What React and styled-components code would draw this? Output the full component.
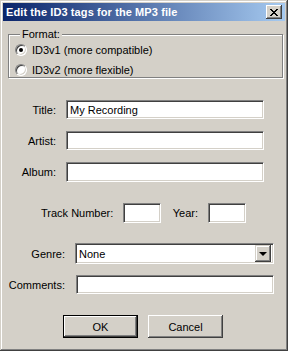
import React, { useState } from 'react';
import styled, { createGlobalStyle } from 'styled-components';

const GlobalStyle = createGlobalStyle`
  html, body {
    margin: 0;
    padding: 0;
    background: #d4d0c8;
  }
  body {
    font-family: "Liberation Sans", Arial, sans-serif;
    font-size: 11px;
    color: #000;
  }
`;

const Window = styled.div`
  width: 288px;
  height: 351px;
  box-sizing: border-box;
  padding: 3px;
  background: #d4d0c8;
  box-shadow:
    inset -1px -1px #404040,
    inset 1px 1px #d4d0c8,
    inset -2px -2px #808080,
    inset 2px 2px #fff;
  display: flex;
  flex-direction: column;
`;

const TitleBar = styled.div`
  height: 18px;
  display: flex;
  align-items: center;
  justify-content: space-between;
  padding: 0 3px 0 2px;
  background: linear-gradient(to right, #0a246a, #a6caf0);
  color: #fff;
  font-weight: bold;
  font-size: 11px;
`;

const Caption = styled.span`
  padding-left: 1px;
  letter-spacing: 0.1px;
`;

const CloseButton = styled.button`
  width: 16px;
  height: 14px;
  padding: 0;
  border: none;
  background: #d4d0c8;
  display: flex;
  align-items: center;
  justify-content: center;
  box-shadow:
    inset -1px -1px #404040,
    inset 1px 1px #fff,
    inset -2px -2px #808080;
`;

const Body = styled.div`
  display: flex;
  flex-direction: column;
  padding: 7px 2px 0 5px;
`;

const GroupBox = styled.fieldset`
  margin: 0;
  padding: 4px 0 0 6px;
  height: 50px;
  box-sizing: border-box;
  border: 1px solid #808080;
  box-shadow: inset 1px 1px #fff, 1px 1px #fff;
  display: flex;
  flex-direction: column;
  gap: 8px;
`;

const Legend = styled.legend`
  padding: 0 2px;
  margin-left: 5px;
  line-height: 12px;
  background: #d4d0c8;
`;

const RadioRow = styled.label`
  display: flex;
  align-items: center;
  gap: 5px;
  height: 12px;
  cursor: default;
`;

const RadioDot = styled.span`
  position: relative;
  width: 12px;
  height: 12px;
  box-sizing: border-box;
  border-radius: 50%;
  background: #fff;
  border: 1px solid;
  border-color: #808080 #fff #fff #808080;
  box-shadow: inset 1px 1px #404040, inset -1px -1px #d4d0c8;

  &::after {
    content: '';
    display: ${({ $checked }) => ($checked ? 'block' : 'none')};
    position: absolute;
    left: 3px;
    top: 3px;
    width: 4px;
    height: 4px;
    border-radius: 50%;
    background: #000;
  }
`;

const Row = styled.div`
  display: flex;
  align-items: center;
  margin-top: ${({ $top }) => $top}px;
  padding-left: ${({ $indent }) => $indent || 0}px;
`;

const Label = styled.span`
  width: ${({ $w }) => $w}px;
  text-align: right;
  white-space: nowrap;
  margin-right: ${({ $gap }) => $gap}px;
  flex-shrink: 0;
`;

const TextBox = styled.div`
  width: ${({ $w }) => $w}px;
  height: ${({ $h }) => $h || 19}px;
  box-sizing: border-box;
  background: #fff;
  border: 1px solid;
  border-color: #808080 #fff #fff #808080;
  box-shadow: inset 1px 1px #404040, inset -1px -1px #d4d0c8;
  padding: 0 3px;
  display: flex;
  align-items: center;
  flex-shrink: 0;
`;

const Select = styled(TextBox)`
  padding-right: 2px;
  justify-content: space-between;
`;

const DropButton = styled.span`
  width: 16px;
  height: 17px;
  box-sizing: border-box;
  background: #d4d0c8;
  display: flex;
  align-items: center;
  justify-content: center;
  box-shadow:
    inset -1px -1px #404040,
    inset 1px 1px #d4d0c8,
    inset -2px -2px #808080,
    inset 2px 2px #fff;
`;

const Arrow = styled.span`
  width: 0;
  height: 0;
  border-left: 4px solid transparent;
  border-right: 4px solid transparent;
  border-top: 4px solid #000;
  margin-top: 1px;
`;

const ButtonRow = styled.div`
  display: flex;
  gap: 10px;
  margin-top: 21px;
  padding-left: 55px;
`;

const Button = styled.button`
  width: 75px;
  height: 23px;
  padding: 0;
  font: inherit;
  color: #000;
  background: #d4d0c8;
  border: ${({ $default }) => ($default ? '1px solid #000' : 'none')};
  box-shadow: ${({ $default }) =>
    $default
      ? 'inset -1px -1px #404040, inset 1px 1px #fff, inset -2px -2px #808080'
      : 'inset -1px -1px #404040, inset 1px 1px #fff, inset -2px -2px #808080, inset 2px 2px #d4d0c8'};
`;

const CloseIcon = () => (
  <svg width="8" height="7" viewBox="0 0 8 7" shapeRendering="crispEdges">
    <path
      d="M0 0h2v1h-2zM6 0h2v1h-2zM1 1h2v1h-2zM5 1h2v1h-2zM2 2h4v1h-4zM3 3h2v1h-2zM2 4h4v1h-4zM1 5h2v1h-2zM5 5h2v1h-2zM0 6h2v1h-2zM6 6h2v1h-2z"
      fill="#000"
    />
  </svg>
);

export default function App() {
  const [format, setFormat] = useState('v1');

  return (
    <>
      <GlobalStyle />
      <Window>
        <TitleBar>
          <Caption>Edit the ID3 tags for the MP3 file</Caption>
          <CloseButton>
            <CloseIcon />
          </CloseButton>
        </TitleBar>
        <Body>
          <GroupBox>
            <Legend>Format:</Legend>
            <RadioRow onClick={() => setFormat('v1')}>
              <RadioDot $checked={format === 'v1'} />
              ID3v1 (more compatible)
            </RadioRow>
            <RadioRow onClick={() => setFormat('v2')}>
              <RadioDot $checked={format === 'v2'} />
              ID3v2 (more flexible)
            </RadioRow>
          </GroupBox>

          <Row $top={22}>
            <Label $w={48} $gap={10}>Title:</Label>
            <TextBox $w={198}>My Recording</TextBox>
          </Row>
          <Row $top={12}>
            <Label $w={48} $gap={10}>Artist:</Label>
            <TextBox $w={198} />
          </Row>
          <Row $top={12}>
            <Label $w={48} $gap={10}>Album:</Label>
            <TextBox $w={198} $h={20} />
          </Row>

          <Row $top={21} $indent={33}>
            <Label $w={71} $gap={11}>Track Number:</Label>
            <TextBox $w={38} $h={20} />
            <Label $w={37} $gap={10}>Year:</Label>
            <TextBox $w={38} $h={20} />
          </Row>

          <Row $top={20}>
            <Label $w={57} $gap={10}>Genre:</Label>
            <Select $w={199} $h={21}>
              None
              <DropButton>
                <Arrow />
              </DropButton>
            </Select>
          </Row>
          <Row $top={11}>
            <Label $w={57} $gap={11}>Comments:</Label>
            <TextBox $w={198} />
          </Row>

          <ButtonRow>
            <Button $default>OK</Button>
            <Button>Cancel</Button>
          </ButtonRow>
        </Body>
      </Window>
    </>
  );
}
